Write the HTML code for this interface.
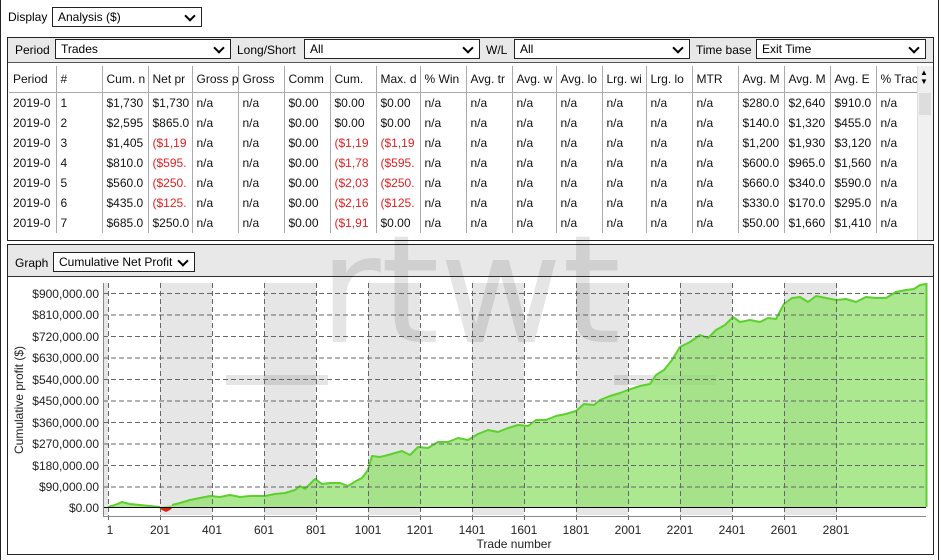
<!DOCTYPE html>
<html><head><meta charset="utf-8"><style>
*{box-sizing:border-box;margin:0;padding:0}
body{width:941px;height:560px;background:#fff;font-family:"Liberation Sans",sans-serif;font-size:12px;color:#000;position:relative;overflow:hidden}
.abs{position:absolute}
.sel{position:absolute;border:1px solid #222;background:#fff;height:20px;padding:2px 5px;line-height:15px;font-size:12px}
.sel:after{content:"";position:absolute;right:7px;top:4px;width:6px;height:6px;border-right:2px solid #000;border-bottom:2px solid #000;transform:rotate(45deg)}
.grey{background:#e8e8e8}
table{border-collapse:collapse;position:absolute;left:9px;top:66px;table-layout:fixed;width:909px}
td{border-left:1px solid #aaa;height:20px;padding:0 4px;white-space:nowrap;overflow:hidden;font-size:12px;line-height:20px;color:#111}
tr.h td{height:26px;border-bottom:1px solid #aaa}
td:first-child{border-left:none}
.r{color:#d22}
</style></head><body>
<div class="abs" style="left:0;top:0;width:939px;height:560px;border:1px solid #222;border-top:none;border-bottom:none"></div>
<div class="abs" style="left:8px;top:10px">Display</div>
<div class="sel" style="left:52px;top:7px;width:150px">Analysis ($)</div>

<div class="abs" style="left:7px;top:37px;width:927px;height:204px;border:1px solid #222"></div>
<div class="abs grey" style="left:8px;top:38px;width:925px;height:25px;border-bottom:1px solid #555"></div>
<div class="abs" style="left:15px;top:43px">Period</div>
<div class="sel" style="left:55px;top:39px;width:176px">Trades</div>
<div class="abs" style="left:237px;top:43px">Long/Short</div>
<div class="sel" style="left:304px;top:39px;width:176px">All</div>
<div class="abs" style="left:486px;top:43px">W/L</div>
<div class="sel" style="left:514px;top:39px;width:176px">All</div>
<div class="abs" style="left:696px;top:43px">Time base</div>
<div class="sel" style="left:756px;top:39px;width:170px">Exit Time</div>

<table>
<colgroup><col style="width:47px"><col style="width:46px"><col style="width:46px"><col style="width:44px"><col style="width:46px"><col style="width:46px"><col style="width:46px"><col style="width:46px"><col style="width:44px"><col style="width:46px"><col style="width:46px"><col style="width:44px"><col style="width:46px"><col style="width:44px"><col style="width:46px"><col style="width:46px"><col style="width:46px"><col style="width:46px"><col style="width:46px"><col style="width:42px"></colgroup>
<tr class="h"><td>Period</td><td>#</td><td>Cum. n</td><td>Net pr</td><td>Gross p</td><td>Gross</td><td>Comm</td><td>Cum.</td><td>Max. d</td><td>% Win</td><td>Avg. tr</td><td>Avg. w</td><td>Avg. lo</td><td>Lrg. wi</td><td>Lrg. lo</td><td>MTR</td><td>Avg. M</td><td>Avg. M</td><td>Avg. E</td><td>% Trac</td></tr>
<tr><td>2019-0</td><td>1</td><td>$1,730</td><td>$1,730</td><td>n/a</td><td>n/a</td><td>$0.00</td><td>$0.00</td><td>$0.00</td><td>n/a</td><td>n/a</td><td>n/a</td><td>n/a</td><td>n/a</td><td>n/a</td><td>n/a</td><td>$280.0</td><td>$2,640</td><td>$910.0</td><td>n/a</td></tr>
<tr><td>2019-0</td><td>2</td><td>$2,595</td><td>$865.0</td><td>n/a</td><td>n/a</td><td>$0.00</td><td>$0.00</td><td>$0.00</td><td>n/a</td><td>n/a</td><td>n/a</td><td>n/a</td><td>n/a</td><td>n/a</td><td>n/a</td><td>$140.0</td><td>$1,320</td><td>$455.0</td><td>n/a</td></tr>
<tr><td>2019-0</td><td>3</td><td>$1,405</td><td class="r">($1,19</td><td>n/a</td><td>n/a</td><td>$0.00</td><td class="r">($1,19</td><td class="r">($1,19</td><td>n/a</td><td>n/a</td><td>n/a</td><td>n/a</td><td>n/a</td><td>n/a</td><td>n/a</td><td>$1,200</td><td>$1,930</td><td>$3,120</td><td>n/a</td></tr>
<tr><td>2019-0</td><td>4</td><td>$810.0</td><td class="r">($595.</td><td>n/a</td><td>n/a</td><td>$0.00</td><td class="r">($1,78</td><td class="r">($595.</td><td>n/a</td><td>n/a</td><td>n/a</td><td>n/a</td><td>n/a</td><td>n/a</td><td>n/a</td><td>$600.0</td><td>$965.0</td><td>$1,560</td><td>n/a</td></tr>
<tr><td>2019-0</td><td>5</td><td>$560.0</td><td class="r">($250.</td><td>n/a</td><td>n/a</td><td>$0.00</td><td class="r">($2,03</td><td class="r">($250.</td><td>n/a</td><td>n/a</td><td>n/a</td><td>n/a</td><td>n/a</td><td>n/a</td><td>n/a</td><td>$660.0</td><td>$340.0</td><td>$590.0</td><td>n/a</td></tr>
<tr><td>2019-0</td><td>6</td><td>$435.0</td><td class="r">($125.</td><td>n/a</td><td>n/a</td><td>$0.00</td><td class="r">($2,16</td><td class="r">($125.</td><td>n/a</td><td>n/a</td><td>n/a</td><td>n/a</td><td>n/a</td><td>n/a</td><td>n/a</td><td>$330.0</td><td>$170.0</td><td>$295.0</td><td>n/a</td></tr>
<tr><td>2019-0</td><td>7</td><td>$685.0</td><td>$250.0</td><td>n/a</td><td>n/a</td><td>$0.00</td><td class="r">($1,91</td><td>$0.00</td><td>n/a</td><td>n/a</td><td>n/a</td><td>n/a</td><td>n/a</td><td>n/a</td><td>n/a</td><td>$50.00</td><td>$1,660</td><td>$1,410</td><td>n/a</td></tr>
</table>
<div class="abs" style="left:917px;top:66px;width:16px;height:174px;background:#f0f0f0;border-left:1px solid #ddd"></div>
<div class="abs" style="left:919px;top:93px;width:12px;height:22px;background:#ddd"></div>
<div class="abs" style="left:920px;top:68px;font-size:8px;line-height:9px">▲<br>▼</div>

<div class="abs" style="left:7px;top:244px;width:927px;height:311px;border:1px solid #222"></div>
<div class="abs grey" style="left:8px;top:245px;width:925px;height:32px;border-bottom:1px solid #333"></div>
<div class="abs" style="left:15px;top:256px">Graph</div>
<div class="sel" style="left:53px;top:252px;width:142px">Cumulative Net Profit</div>

<svg class="abs" style="left:0;top:0" width="941" height="560" xmlns="http://www.w3.org/2000/svg" font-family="Liberation Sans, sans-serif" font-size="12">
<g fill="#e6e6e6">
<rect x="103" y="283" width="5" height="232"/>
<rect x="160" y="283" width="52" height="232"/><rect x="264" y="283" width="52" height="232"/><rect x="368" y="283" width="52" height="232"/><rect x="472" y="283" width="52" height="232"/><rect x="576" y="283" width="52" height="232"/><rect x="680" y="283" width="52" height="232"/><rect x="784" y="283" width="53" height="232"/>
</g>
<text x="470" y="342" font-size="150" fill="#000" fill-opacity="0.1" text-anchor="middle" font-family="DejaVu Sans, sans-serif">rtwt</text>
<rect x="226" y="375" width="102" height="10" fill="#000" fill-opacity="0.1"/>
<rect x="614" y="375" width="102" height="10" fill="#000" fill-opacity="0.1"/>
<polygon fill="#8fe06a" fill-opacity="0.75" points="108,507 115,505 122,502 130,504 140,505 150,506 160,507 172,505 180,503 190,500 200,498 210,496 220,497 230,495 240,497 250,496 265,496 275,494 285,493 295,490 300,486 305,489 315,479 322,484 330,483 340,483 348,486 356,481 362,478 368,470 372,456 380,457 388,455 395,453 402,451 410,455 418,447 428,448 438,442 448,442 458,438 468,440 478,434 488,430 498,432 508,428 518,425 528,426 536,420 546,420 556,416 566,414 576,411 584,404 594,405 600,400 610,396 620,393 628,390 640,386 650,384 656,375 664,370 672,360 680,347 690,342 700,335 708,338 716,330 725,325 733,317 740,322 750,320 760,322 768,318 776,319 784,304 792,298 800,297 808,302 816,296 826,298 836,300 846,299 856,302 866,297 876,298 886,298 896,292 906,290 914,289 920,285 926,284 926,507"/>
<path fill="none" stroke="#5cd12c" stroke-width="2" stroke-linejoin="round" d="M108,507 L115,505 122,502 130,504 140,505 150,506 160,507 M172,505 L180,503 190,500 200,498 210,496 220,497 230,495 240,497 250,496 265,496 275,494 285,493 295,490 300,486 305,489 315,479 322,484 330,483 340,483 348,486 356,481 362,478 368,470 372,456 380,457 388,455 395,453 402,451 410,455 418,447 428,448 438,442 448,442 458,438 468,440 478,434 488,430 498,432 508,428 518,425 528,426 536,420 546,420 556,416 566,414 576,411 584,404 594,405 600,400 610,396 620,393 628,390 640,386 650,384 656,375 664,370 672,360 680,347 690,342 700,335 708,338 716,330 725,325 733,317 740,322 750,320 760,322 768,318 776,319 784,304 792,298 800,297 808,302 816,296 826,298 836,300 846,299 856,302 866,297 876,298 886,298 896,292 906,290 914,289 920,285 926,284"/>
<polygon fill="#e02010" points="158,507 162,510 166,512 170,510 173,507"/>
<g stroke="#666" stroke-dasharray="5,3" stroke-width="1">
<line x1="103" x2="926" y1="293.5" y2="293.5"/><line x1="103" x2="926" y1="315" y2="315"/><line x1="103" x2="926" y1="336.5" y2="336.5"/><line x1="103" x2="926" y1="358" y2="358"/><line x1="103" x2="926" y1="379.5" y2="379.5"/><line x1="103" x2="926" y1="401" y2="401"/><line x1="103" x2="926" y1="422.5" y2="422.5"/><line x1="103" x2="926" y1="444" y2="444"/><line x1="103" x2="926" y1="465.5" y2="465.5"/><line x1="103" x2="926" y1="487" y2="487"/>
<line x1="108.5" x2="108.5" y1="283" y2="520"/><line x1="160.5" x2="160.5" y1="283" y2="520"/><line x1="212.5" x2="212.5" y1="283" y2="520"/><line x1="264.5" x2="264.5" y1="283" y2="520"/><line x1="316.5" x2="316.5" y1="283" y2="520"/><line x1="368.5" x2="368.5" y1="283" y2="520"/><line x1="420.5" x2="420.5" y1="283" y2="520"/><line x1="472.5" x2="472.5" y1="283" y2="520"/><line x1="524.5" x2="524.5" y1="283" y2="520"/><line x1="576.5" x2="576.5" y1="283" y2="520"/><line x1="628.5" x2="628.5" y1="283" y2="520"/><line x1="680.5" x2="680.5" y1="283" y2="520"/><line x1="732.5" x2="732.5" y1="283" y2="520"/><line x1="784.5" x2="784.5" y1="283" y2="520"/><line x1="836.5" x2="836.5" y1="283" y2="520"/>
</g>
<line x1="103" x2="926" y1="507.5" y2="507.5" stroke="#000"/>
<line x1="103" x2="926" y1="516.5" y2="516.5" stroke="#888"/>
<line x1="103.5" x2="103.5" y1="283" y2="516" stroke="#888"/>
<line x1="926.5" x2="926.5" y1="283" y2="507" stroke="#5cd12c" stroke-width="2"/>
<g text-anchor="end" fill="#222">
<text x="99" y="298">$900,000.00</text><text x="99" y="319">$810,000.00</text><text x="99" y="341">$720,000.00</text><text x="99" y="362">$630,000.00</text><text x="99" y="384">$540,000.00</text><text x="99" y="405">$450,000.00</text><text x="99" y="427">$360,000.00</text><text x="99" y="448">$270,000.00</text><text x="99" y="470">$180,000.00</text><text x="99" y="491">$90,000.00</text><text x="99" y="512">$0.00</text>
</g>
<g text-anchor="middle" fill="#222">
<text x="110" y="534">1</text><text x="160" y="534">201</text><text x="212" y="534">401</text><text x="264" y="534">601</text><text x="316" y="534">801</text><text x="368" y="534">1001</text><text x="420" y="534">1201</text><text x="472" y="534">1401</text><text x="524" y="534">1601</text><text x="576" y="534">1801</text><text x="628" y="534">2001</text><text x="680" y="534">2201</text><text x="732" y="534">2401</text><text x="784" y="534">2601</text><text x="836" y="534">2801</text>
<text x="514" y="548">Trade number</text>
<text transform="translate(23,400) rotate(-90)">Cumulative profit ($)</text>
</g>
</svg>
</body></html>
